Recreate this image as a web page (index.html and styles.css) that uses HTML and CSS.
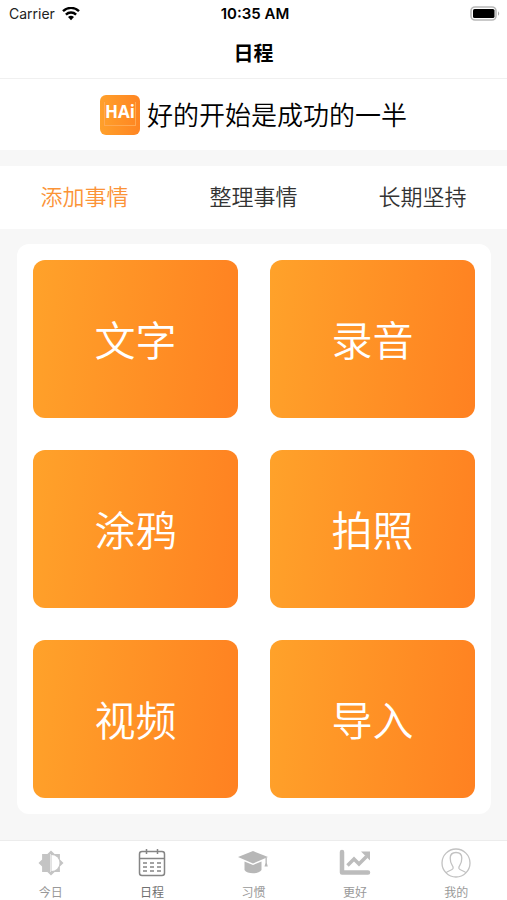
FILE: index.html
```html
<!DOCTYPE html>
<html lang="zh-CN">
<head>
<meta charset="utf-8">
<meta name="viewport" content="width=device-width, initial-scale=1">
<title>日程</title>
<link rel="stylesheet" href="styles.css">
</head>
<body>
<div class="app">
  <div class="status">
    <div class="carrier">
      <span>Carrier</span>
      <svg width="18" height="14" viewBox="0 0 18 14" aria-hidden="true">
        <g fill="none" stroke="#000" stroke-width="2.4">
          <path d="M1 4.200a11.400 11.400 0 0 1 16 0"/>
          <path d="M3.900 7.600a7.300 7.300 0 0 1 10.200 0"/>
        </g>
        <path d="M9 13.300l-3-3.200a4.400 4.400 0 0 1 6 0z"/>
      </svg>
    </div>
    <time class="clock">10:35 AM</time>
    <div class="battery">
      <svg width="31" height="15" viewBox="0 0 31 15" aria-hidden="true">
        <rect x="1" y="1" width="25" height="13" rx="4" fill="#fff" stroke="#b8b8b8" stroke-width="1.6"/>
        <rect x="3" y="3" width="21.500" height="9" rx="1.600"/>
        <path d="M28 5.200q2.400 2.300 0 4.600z" fill="#a8a8a8"/>
      </svg>
    </div>
  </div>
  <header class="title"><h1>日程</h1></header>
  <section class="banner">
    <div class="logo"><span>HAi</span></div>
    <p>好的开始是成功的一半</p>
  </section>
  <nav class="tabs">
    <button type="button" class="tab active">添加事情</button>
    <button type="button" class="tab">整理事情</button>
    <button type="button" class="tab">长期坚持</button>
  </nav>
  <main class="content">
    <div class="card">
      <button type="button" class="tile">文字</button>
      <button type="button" class="tile">录音</button>
      <button type="button" class="tile">涂鸦</button>
      <button type="button" class="tile">拍照</button>
      <button type="button" class="tile">视频</button>
      <button type="button" class="tile">导入</button>
    </div>
  </main>
  <nav class="bar">
    <a class="item" href="#today">
      <svg width="32" height="32" viewBox="0 0 32 32" aria-hidden="true">
        <path fill="#c4c4c4" d="M16 3.500l3.600 3.600h5.300v5.300l3.600 3.600-3.600 3.600v5.300h-5.300L16 28.500l-3.600-3.600H7.100v-5.300L3.500 16l3.600-3.600V7.100h5.300z"/>
        <path fill="#fff" d="M16.500 8a8 8 0 0 1 0 16z"/>
        <path stroke="#e6e6e6" d="M15.500 7v18"/>
      </svg>
      <span>今日</span>
    </a>
    <a class="item current" href="#schedule" aria-current="page">
      <svg width="32" height="32" viewBox="0 0 32 32" fill="none" stroke="#858585" aria-hidden="true">
        <rect x="3.500" y="4.500" width="25" height="24" rx="2.500" stroke-width="1.500"/>
        <path d="M3.500 11.500h25M10.500 2v5M21.500 2v5" stroke-width="1.500"/>
        <path d="M7 16h4M14 16h4M21 16h4M7 20h4M14 20h4M21 20h4M7 24h4M14 24h4M21 24h4" stroke-width="1.600"/>
      </svg>
      <span>日程</span>
    </a>
    <a class="item" href="#habit">
      <svg width="32" height="32" viewBox="0 0 32 32" fill="#b7b7b7" aria-hidden="true">
        <path d="M1 10L16 4l15 6-15 6.500z"/>
        <path d="M7.500 14.500l8.500 3.500 8.500-3.500v8.500c-2.500 4.300-14.500 4.300-17 0z"/>
        <path d="M28.500 10.500h1.300v5.500l1 3.500h-3.300l1-3.500z"/>
      </svg>
      <span>习惯</span>
    </a>
    <a class="item" href="#better">
      <svg width="32" height="32" viewBox="0 0 32 32" aria-hidden="true">
        <path fill="none" stroke="#bcbcbc" stroke-width="4.500" stroke-linecap="round" stroke-linejoin="round" d="M3 5v20.500h26"/>
        <path fill="none" stroke="#bcbcbc" stroke-width="3.500" d="M8.500 18.500l6.500-6.500 5 5 7.500-7.500"/>
        <path fill="#bcbcbc" d="M22 4.500h9v9z"/>
      </svg>
      <span>更好</span>
    </a>
    <a class="item" href="#mine">
      <svg width="32" height="32" viewBox="0 0 32 32" fill="none" stroke="#c2c2c2" stroke-width="1.300" aria-hidden="true">
        <circle cx="16" cy="16" r="14"/>
        <path d="M6 26c1-2 6-2.500 7-4.500.5-1.200 0-2.200-.8-3.200-2-2.600-2-5-2-7.300 0-3.500 2.500-5.500 5.800-5.500s5.800 2 5.800 5.500c0 2.300 0 4.700-2 7.300-.8 1-1.300 2-.8 3.200 1 2 6 2.500 7 4.500"/>
      </svg>
      <span>我的</span>
    </a>
  </nav>
</div>
</body>
</html>
```

FILE: styles.css
```css
* {
  box-sizing: border-box;
}

body {
  margin: 0;
  background: #fff;
  color: #000;
  font-family: Inter, "Noto Sans CJK SC", sans-serif;
}

h1,
p {
  margin: 0;
}

button {
  border: 0;
  padding: 0;
  background: none;
  font-family: inherit;
  cursor: pointer;
}

svg {
  display: block;
}

.app {
  display: flex;
  flex-direction: column;
  min-height: 100vh;
}

.status {
  display: grid;
  grid-template-columns: 1fr auto 1fr;
  align-items: center;
  height: 27px;
  padding: 0 6px 0 9px;
  font-size: 14px;
}

.carrier {
  display: flex;
  align-items: center;
  gap: 7px;
  color: #222;
}

.clock {
  font-size: 15px;
  font-weight: 600;
}

.battery {
  justify-self: end;
}

.title {
  display: flex;
  align-items: center;
  justify-content: center;
  height: 52px;
  border-bottom: 1px solid #f0f0f0;
}

.title h1 {
  font-size: 20px;
  font-weight: 700;
}

.banner {
  display: flex;
  align-items: center;
  justify-content: center;
  gap: 7px;
  height: 71px;
}

.banner p {
  padding-top: 3px;
  font-size: 26px;
  font-weight: 350;
  line-height: 40px;
}

.logo {
  display: flex;
  justify-content: center;
  width: 40px;
  height: 40px;
  padding-top: 7px;
  border-radius: 6px;
  background: linear-gradient(90deg, #ffa02b, #ff8522);
  color: #fff;
  font: 700 17px/20px "Open Sans", sans-serif;
}

.logo span {
  height: 24px;
  border: 1px solid #ffa952;
  border-top: 0;
}

.tabs {
  display: grid;
  grid-template-columns: repeat(3, 1fr);
  height: 79px;
  border-top: 16px solid #f7f7f7;
}

.tab {
  padding-bottom: 5px;
  color: #333;
  font-size: 22px;
  font-weight: 350;
}

.tab.active {
  color: #fb9337;
}

.content {
  flex: 1;
  padding: 15px 16px 26px 17px;
  background: #f7f7f7;
}

.card {
  display: grid;
  grid-template-columns: 1fr 1fr;
  gap: 32px;
  padding: 16px;
  border-radius: 12px;
  background: #fff;
}

.tile {
  height: 158px;
  padding-bottom: 3px;
  border-radius: 12px;
  background: linear-gradient(96deg, #ffa22a, #ff8121);
  color: #fff;
  font-size: 41px;
  font-weight: 350;
}

.bar {
  display: grid;
  grid-template-columns: repeat(5, 1fr);
  height: 60px;
  border-top: 1px solid #ececec;
}

.item {
  display: flex;
  flex-direction: column;
  align-items: center;
  gap: 5px;
  padding-top: 6px;
  color: #999;
  font-size: 12px;
  line-height: 18px;
  text-decoration: none;
}

.item.current {
  color: #707070;
}
```
